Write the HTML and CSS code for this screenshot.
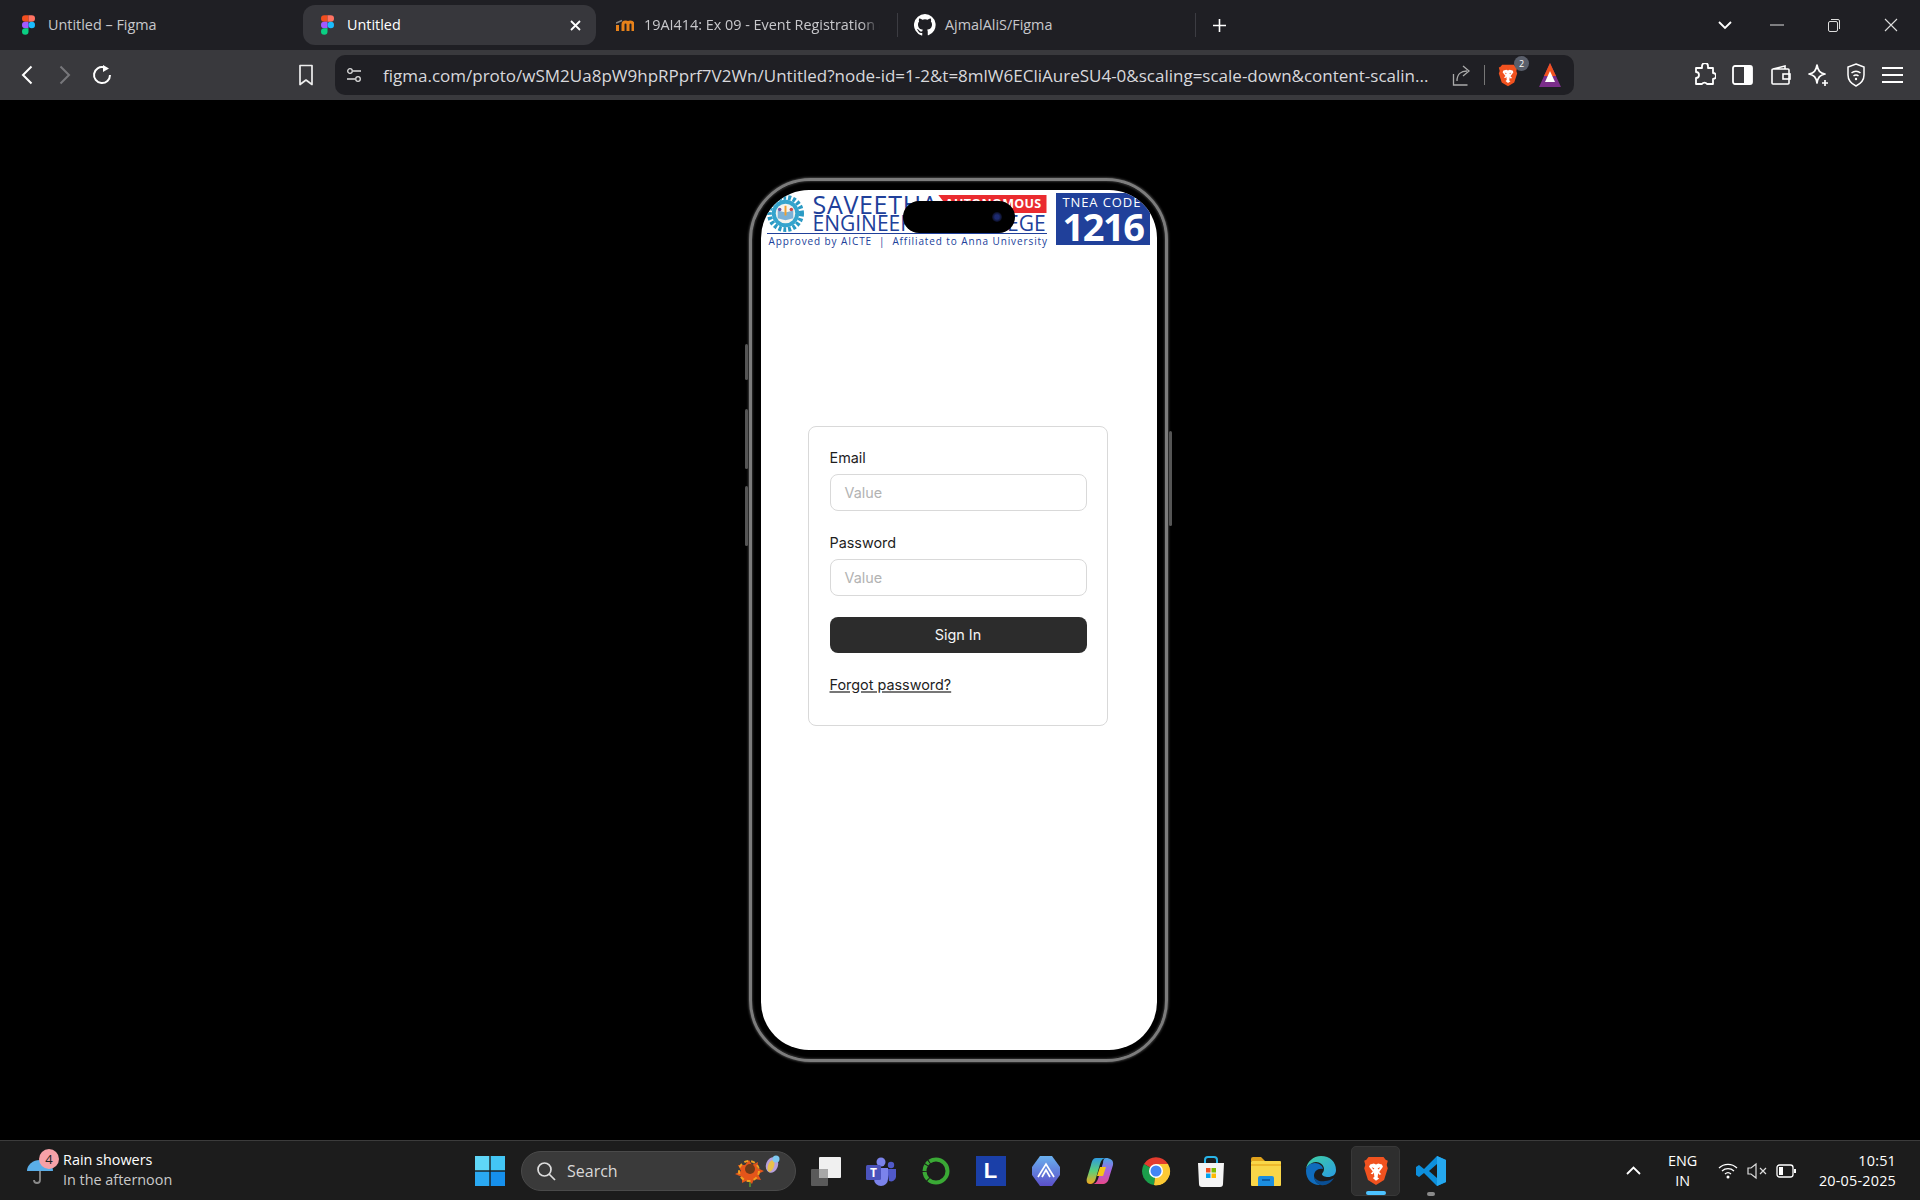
FILE: index.html
```html
<!DOCTYPE html>
<html lang="en">
  <head>
    <meta charset="UTF-8" />
    <title>Untitled</title>
    <link rel="stylesheet" href="styles.css">
  </head>
  <body>
    <svg class="defs" width="0" height="0">
      <symbol id="figma" viewBox="0 0 16 24">
        <path fill="#f24e1e" d="M8 0H4a4 4 0 0 0 0 8h4z"/>
        <path fill="#ff7262" d="M8 0h4a4 4 0 0 1 0 8H8z"/>
        <path fill="#a259ff" d="M8 8H4a4 4 0 0 0 0 8h4z"/>
        <circle fill="#1abcfe" cx="12" cy="12" r="4"/>
        <path fill="#0acf83" d="M4 16h4v4a4 4 0 1 1-4-4z"/>
      </symbol>
      <symbol id="brave" viewBox="0 0 24 28">
        <path fill="#f1521f" d="M5 1h14l2 2.500 2 1-1 4 1 3-3.500 11L12 27l-7.500-4.500L1 11.500l1-3-1-4 2-1z"/>
        <path fill="#fff" d="M6.500 8 10 7l2 1 2-1 3.500 1 1 2-3.500 5 2 2-2 .5-1-1.500-.5 4 1.500 1L12 23l-3-2.500 1.500-1-.5-4-1 1.500-2-.5 2-2L5.500 10z"/>
        <path fill="#f1521f" d="M8 10.500l2.500 1-1 1zM16 10.500l-2.500 1 1 1z"/>
      </symbol>
    </svg>

    <div class="window">
      <div class="tabbar">
        <div class="tab tab-first">
          <svg class="favicon" width="13" height="20"><use href="#figma"/></svg>
          <span>Untitled – Figma</span>
        </div>
        <div class="tab tab-active">
          <svg class="favicon" width="13" height="20"><use href="#figma"/></svg>
          <span>Untitled</span>
          <svg class="tab-close" width="11" height="11" viewBox="0 0 11 11"><path d="M1 1l9 9M10 1l-9 9" stroke="#fff" stroke-width="1.800"/></svg>
        </div>
        <div class="tab tab-moodle">
          <svg class="favicon" width="18" height="14" viewBox="0 0 18 14"><path d="M1.500 13V7M7 13V6.500a2.500 2.500 0 0 1 5 0V13M12 6.500a2.500 2.500 0 0 1 5 0V13" fill="none" stroke="#e8821a" stroke-width="3"/><path d="M0 5l6-2.500" stroke="#8a8a8a" stroke-width="1.500"/></svg>
          <span class="fade">19AI414: Ex 09 - Event Registration (</span>
        </div>
        <div class="tab tab-github">
          <svg class="favicon" width="22" height="22" viewBox="0 0 16 16"><path fill="#fff" d="M8 0a8 8 0 0 0-2.500 15.600c.4.100.5-.2.500-.4v-1.400c-2.200.5-2.700-1-2.700-1-.4-.9-.9-1.200-.9-1.200-.7-.5.100-.5.100-.5.800.1 1.200.8 1.200.8.700 1.200 1.900.9 2.300.7.100-.5.300-.9.500-1.100-1.800-.2-3.600-.9-3.600-4 0-.9.300-1.600.8-2.100-.1-.2-.4-1 .1-2.100 0 0 .7-.2 2.200.8a7.600 7.600 0 0 1 4 0c1.500-1 2.200-.8 2.200-.8.400 1.100.2 1.900.1 2.100.5.600.8 1.300.8 2.100 0 3.100-1.900 3.700-3.600 3.900.3.200.5.700.5 1.500v2.200c0 .2.100.5.500.4A8 8 0 0 0 8 0z"/></svg>
          <span>AjmalAliS/Figma</span>
        </div>
        <svg class="new-tab" width="15" height="15" viewBox="0 0 15 15"><path d="M7.500 1v13M1 7.500h13" stroke="#fff" stroke-width="1.600"/></svg>
        <div class="win-controls">
          <svg class="win-chevron" width="14" height="9" viewBox="0 0 14 9"><path d="M1 1l6 6 6-6" fill="none" stroke="#fff" stroke-width="1.800"/></svg>
          <svg width="14" height="2" viewBox="0 0 14 2"><path d="M0 1h14" stroke="#ddd" stroke-width="1"/></svg>
          <svg width="14" height="14" viewBox="0 0 14 14"><rect x="1.500" y="3.500" width="9" height="10" rx="1.500" fill="none" stroke="#ddd"/><path d="M4 1.500h7a1.500 1.500 0 0 1 1.500 1.500v8" fill="none" stroke="#ddd"/></svg>
          <svg width="14" height="14" viewBox="0 0 14 14"><path d="M1 1l12 12M13 1L1 13" stroke="#ddd" stroke-width="1.100"/></svg>
        </div>
      </div>

      <div class="toolbar">
        <div class="nav-buttons">
          <svg width="12" height="20" viewBox="0 0 12 20"><path d="M10.500 1.500L2 10l8.500 8.500" fill="none" stroke="#fff" stroke-width="2"/></svg>
          <svg width="12" height="20" viewBox="0 0 12 20"><path d="M1.500 1.500L10 10l-8.500 8.500" fill="none" stroke="#77777b" stroke-width="2"/></svg>
          <svg class="reload" width="22" height="22" viewBox="0 0 22 22"><path d="M13 3.300A8 8 0 1 0 19 11" fill="none" stroke="#fff" stroke-width="2"/><path d="M12 1v7l6-3.500z" fill="#fff"/></svg>
        </div>
        <svg class="bookmark" width="16" height="22" viewBox="0 0 16 22"><path d="M2 1.500h12v19l-6-4.500-6 4.500z" fill="none" stroke="#eee" stroke-width="1.700" stroke-linejoin="round"/></svg>
        <div class="addressbar">
          <svg class="site-settings" width="16" height="16" viewBox="0 0 16 16"><g fill="none" stroke="#ddd" stroke-width="1.300"><circle cx="4" cy="4" r="2.300"/><path d="M7 4h8M1 12h8"/><circle cx="12" cy="12" r="2.300"/></g></svg>
          <span class="url">figma.com/proto/wSM2Ua8pW9hpRPprf7V2Wn/Untitled?node-id=1-2&amp;t=8mlW6ECliAureSU4-0&amp;scaling=scale-down&amp;content-scalin...</span>
          <svg class="share" width="20" height="22" viewBox="0 0 20 22"><path d="M1.500 10v11h14" fill="none" stroke="#aaa" stroke-width="1.300"/><path d="M5 17c0-7 4-10 10-10M11 2l6 5-6 5" fill="none" stroke="#aaa" stroke-width="1.300"/></svg>
          <i class="addr-divider"></i>
          <div class="brave-shield">
            <svg width="20" height="25"><use href="#brave"/></svg>
            <b class="shield-badge">2</b>
          </div>
          <svg class="rewards" width="24" height="26" viewBox="0 0 24 26"><path d="M12 1l11 24H1z" fill="#7b2d8b"/><path d="M12 1l6 13H6z" fill="#f1521f"/><path d="M12 9l5 11H7z" fill="#fff"/></svg>
        </div>
        <div class="extensions">
          <svg width="22" height="24" viewBox="0 0 22 24"><path d="M8 3a3 3 0 0 1 6 0v2h5v5a3 3 0 0 1 0 6v5H13a3 3 0 0 0-5 0H2v-6a3 3 0 0 0 0-6V5h6z" fill="none" stroke="#fff" stroke-width="1.800" stroke-linejoin="round"/></svg>
          <svg width="21" height="20" viewBox="0 0 21 20"><rect x="1" y="1" width="19" height="18" rx="2" fill="none" stroke="#fff" stroke-width="1.800"/><rect x="12" y="1" width="8" height="18" fill="#fff"/></svg>
          <svg width="21" height="20" viewBox="0 0 21 20"><path d="M3 4l12-3v3M2 5a1 1 0 0 1 1-1h15a1 1 0 0 1 1 1v13a1 1 0 0 1-1 1H3a1 1 0 0 1-1-1z" fill="none" stroke="#fff" stroke-width="1.600"/><rect x="13" y="9" width="7" height="5" fill="none" stroke="#fff" stroke-width="1.600"/></svg>
          <svg width="22" height="24" viewBox="0 0 22 24"><path d="M10 2c1 6 3 8 8 9-5 1-7 3-8 9-1-6-3-8-8-9 5-1 7-3 8-9z" fill="none" stroke="#fff" stroke-width="1.700" stroke-linejoin="round"/><path d="M18 17v6M15 20h6" stroke="#fff" stroke-width="1.700"/></svg>
          <svg width="20" height="24" viewBox="0 0 20 24"><path d="M10 1l8 3v8c0 6-4 9-8 11-4-2-8-5-8-11V4z" fill="none" stroke="#fff" stroke-width="1.500"/><path d="M5.500 10a6.500 6.500 0 0 1 9 0M7.500 13a3.500 3.500 0 0 1 5 0" fill="none" stroke="#fff" stroke-width="1.400"/><circle cx="10" cy="16" r="1.200" fill="#fff"/></svg>
          <svg width="21" height="18" viewBox="0 0 21 18"><path d="M0 2h21M0 9h21M0 16h21" stroke="#fff" stroke-width="2"/></svg>
        </div>
      </div>

      <main class="stage">
        <div class="phone">
          <i class="side-btn btn-action"></i>
          <i class="side-btn btn-vol-up"></i>
          <i class="side-btn btn-vol-down"></i>
          <i class="side-btn btn-power"></i>
          <div class="screen">
            <header class="college">
              <div class="college-main">
                <div class="college-name">
                  <svg class="seal" width="37" height="37" viewBox="0 0 38 38">
                    <circle cx="19" cy="19" r="16.500" fill="none" stroke="#2a9ac4" stroke-width="5" stroke-dasharray="3 2"/>
                    <circle cx="19" cy="19" r="14" fill="#35a4cd"/>
                    <circle cx="19" cy="19" r="10" fill="#f4f4ee"/>
                    <path d="M11 24l8 2 8-2v-8l-8 2-8-2z" fill="#7bb2d8"/>
                    <path d="M18 11h2v10h-2z" fill="#f0a030"/>
                    <circle cx="13" cy="15" r="1.800" fill="#7050a0"/>
                    <circle cx="25" cy="15" r="1.800" fill="#d04848"/>
                  </svg>
                  <div class="college-words">
                    <div class="line-saveetha">
                      <span>SAVEETHA</span>
                      <span class="autonomous">AUTONOMOUS</span>
                    </div>
                    <div class="line-engineering">ENGINEERING COLLEGE</div>
                  </div>
                </div>
                <div class="approved">Approved by AICTE &nbsp;|&nbsp; Affiliated to Anna University</div>
              </div>
              <div class="tnea">
                <span class="tnea-label">TNEA CODE</span>
                <span class="tnea-code">1216</span>
              </div>
            </header>

            <div class="island"><i class="camera"></i></div>

            <form class="signin">
              <label class="field-label">Email</label>
              <div class="field-input">Value</div>
              <label class="field-label">Password</label>
              <div class="field-input">Value</div>
              <div class="signin-btn">Sign In</div>
              <a class="forgot">Forgot password?</a>
            </form>
          </div>
        </div>
      </main>

      <footer class="taskbar">
        <div class="weather">
          <div class="weather-icon">
            <svg width="30" height="30" viewBox="0 0 30 30"><path d="M2 15a13 11 0 0 1 26 0z" fill="#5aaee8"/><path d="M15 15v9a3 3 0 0 1-6 0" fill="none" stroke="#8a8a8a" stroke-width="1.800"/></svg>
            <b class="weather-badge">4</b>
          </div>
          <div class="weather-text">
            <span class="weather-title">Rain showers</span>
            <span class="weather-sub">In the afternoon</span>
          </div>
        </div>

        <svg class="start" width="30" height="30" viewBox="0 0 30 30">
          <rect width="14.300" height="14.300" fill="#5fd6f7"/><rect x="15.700" width="14.300" height="14.300" fill="#43c6f5"/>
          <rect y="15.700" width="14.300" height="14.300" fill="#2aa9f2"/><rect x="15.700" y="15.700" width="14.300" height="14.300" fill="#1690ec"/>
        </svg>

        <div class="search">
          <svg width="20" height="20" viewBox="0 0 20 20"><circle cx="8.500" cy="8.500" r="6.500" fill="none" stroke="#ddd" stroke-width="1.700"/><path d="M13 13l6 6" stroke="#ddd" stroke-width="1.700"/></svg>
          <span>Search</span>
          <svg class="search-flower" width="50" height="34" viewBox="0 0 50 34">
            <path d="M17 33V22" stroke="#5a9a30" stroke-width="1.500"/>
            <path d="M16 6l3 5 6-3-1 6 7 3-6 3 3 6-7-1-2 5-4-4-6 3 0-6-7-3 6-3-3-6 7 0z" fill="#e4551a"/>
            <circle cx="16" cy="17" r="10" fill="none" stroke="#f2a020" stroke-width="2" stroke-dasharray="4 3"/>
            <circle cx="17" cy="15" r="5" fill="#6f3a18"/>
            <ellipse cx="39" cy="11" rx="6" ry="8" fill="#b6a0dc" transform="rotate(20 39 11)"/>
            <ellipse cx="38" cy="12" rx="3" ry="6" fill="#e8c04c" transform="rotate(20 38 12)"/>
            <circle cx="43" cy="5" r="3.500" fill="#7ec8f0"/>
          </svg>
        </div>

        <div class="task-icons">
          <span class="task-icon"><svg width="30" height="30" viewBox="0 0 30 30"><rect y="13" width="17" height="17" rx="1" fill="#5a5a5a"/><rect x="8" y="1" width="22" height="21" rx="1" fill="#f0f0f0"/><rect x="8" y="13" width="9" height="9" fill="#a8a8a8"/></svg></span>
          <span class="task-icon"><svg width="30" height="30" viewBox="0 0 30 30"><circle cx="15" cy="6" r="4.500" fill="#7b83eb"/><circle cx="25" cy="9" r="3.200" fill="#5059c9"/><path d="M21 13h9v8a5 5 0 0 1-7 4z" fill="#5059c9"/><path d="M8 12h14v11a7 7 0 0 1-14 0z" fill="#7b83eb"/><rect y="9" width="15" height="15" rx="1.500" fill="#4b53bc"/><text class="teams-t" x="7.500" y="21">T</text></svg></span>
          <span class="task-icon"><svg width="30" height="30" viewBox="0 0 30 30"><circle cx="15" cy="15" r="11.500" fill="none" stroke="#3aa935" stroke-width="4" stroke-dasharray="26 1 8 1 6 1 3 1"/></svg></span>
          <span class="task-icon"><span class="lapp">L</span></span>
          <span class="task-icon"><svg width="28" height="30" viewBox="0 0 28 30"><defs><linearGradient id="arc" x1="0" y1="0" x2="0" y2="1"><stop offset="0" stop-color="#6ab0ee"/><stop offset="1" stop-color="#5b4fc9"/></linearGradient></defs><path d="M8 0h12l8 11v8l-8 11H8L0 19v-8z" fill="url(#arc)"/><path d="M6 21L14 8l8 13M10 21l4-7 4 7" fill="none" stroke="#fff" stroke-width="1.700"/></svg></span>
          <span class="task-icon"><svg width="30" height="30" viewBox="0 0 30 30"><defs><linearGradient id="copa" x1="0" y1="0" x2="0" y2="1"><stop offset="0" stop-color="#2f9be0"/><stop offset=".5" stop-color="#5ad07a"/><stop offset="1" stop-color="#f5a81c"/></linearGradient><linearGradient id="copb" x1="0" y1="0" x2="0" y2="1"><stop offset="0" stop-color="#4aa8e8"/><stop offset=".5" stop-color="#a860e0"/><stop offset="1" stop-color="#e8488a"/></linearGradient></defs><path d="M10 2h10c-3 0-5 2-6 6l-4 14c-1 4-3 6-6 6-3 0-4-3-3-6l4-13c1-4 2-7 5-7z" fill="url(#copa)"/><path d="M20 2c4 0 8 2 7 7l-4 13c-1 4-3 6-7 6H6c3 0 5-2 6-5l5-16c0-3 1-5 3-5z" fill="url(#copb)"/><path d="M14 11h6l-3 9h-6z" fill="#f5c518"/></svg></span>
          <span class="task-icon"><svg width="30" height="30" viewBox="0 0 30 30"><path d="M15 15L3 8a14 14 0 0 1 24 0z" fill="#e33b2e"/><path d="M15 15l-12-7a14 14 0 0 0 10 21z" fill="#1b9e4b"/><path d="M15 15h14a14 14 0 0 1-16 14z" fill="#fcc934"/><path d="M15 8h12a14 14 0 0 1-14 21l7-12z" fill="#fcc934"/><circle cx="15" cy="15" r="7" fill="#fff"/><circle cx="15" cy="15" r="5.500" fill="#4285f4"/></svg></span>
          <span class="task-icon"><svg width="30" height="32" viewBox="0 0 30 32"><path d="M9 8V5a3 3 0 0 1 3-3h6a3 3 0 0 1 3 3v3" fill="none" stroke="#28b4e8" stroke-width="2"/><path d="M2 8h26l-1 21a3 3 0 0 1-3 3H6a3 3 0 0 1-3-3z" fill="#f4f4f4"/><rect x="10" y="13" width="4.500" height="4.500" fill="#f25022"/><rect x="15.500" y="13" width="4.500" height="4.500" fill="#7fba00"/><rect x="10" y="18.500" width="4.500" height="4.500" fill="#00a4ef"/><rect x="15.500" y="18.500" width="4.500" height="4.500" fill="#ffb900"/></svg></span>
          <span class="task-icon"><svg width="30" height="30" viewBox="0 0 30 30"><path d="M0 3a2 2 0 0 1 2-2h8l4 4h-14z" fill="#e0a21c"/><rect y="5" width="30" height="25" rx="1" fill="#f9d648"/><path d="M0 9h30" stroke="#eeb92c" stroke-width="2"/><path d="M9 20h12a2 2 0 0 1 2 2v8H7v-8a2 2 0 0 1 2-2z" fill="#1c8ee0"/><path d="M11 24h8" stroke="#0d5fa8" stroke-width="2"/></svg></span>
          <span class="task-icon"><svg width="30" height="30" viewBox="0 0 30 30"><defs><linearGradient id="edg" x1="0" y1="0" x2="1" y2="1"><stop offset="0" stop-color="#3fd0a0"/><stop offset="1" stop-color="#2a9de4"/></linearGradient></defs><path d="M15 0c9 0 15 6 15 14 0 5-4 7-8 7-3 0-6-1-6-3 0-1 2-2 2-5 0-4-4-7-8-7S2 9 0 13C1 6 7 0 15 0z" fill="url(#edg)"/><path d="M0 15c0-5 4-8 9-8 4 0 8 3 8 6-5-1-9 2-9 7 0 4 3 8 7 9C7 30 0 24 0 15z" fill="#0f6cbd"/><path d="M28 22c-3 5-8 8-13 7-4-1-7-5-7-9 1 4 6 6 11 5 3 0 6-1 9-3z" fill="#0a4f94"/></svg></span>
          <span class="task-icon task-icon-active"><svg width="26" height="30"><use href="#brave"/></svg><i class="running running-active"></i></span>
          <span class="task-icon"><svg width="30" height="30" viewBox="0 0 30 30"><path d="M21 0l9 4v22l-9 4L8 17l-5 4-3-2v-8l3-2 5 4zM21 8l-8 7 8 7z" fill="#0d8fdc"/><path d="M21 0l9 4v22l-9 4z" fill="#25a8ef"/></svg><i class="running"></i></span>
        </div>

        <div class="tray">
          <svg class="tray-chevron" width="15" height="9" viewBox="0 0 15 9"><path d="M1 8l6.500-6.500L14 8" fill="none" stroke="#fff" stroke-width="1.800"/></svg>
          <div class="lang">ENG<br>IN</div>
          <div class="tray-icons">
            <svg width="20" height="18" viewBox="0 0 20 18"><g fill="none" stroke="#fff" stroke-width="1.300"><path d="M1 6a13 13 0 0 1 18 0M4 9a9 9 0 0 1 12 0M7 12a4.500 4.500 0 0 1 6 0"/></g><circle cx="10" cy="15" r="1.500" fill="#fff"/></svg>
            <svg width="20" height="18" viewBox="0 0 20 18"><path d="M1 6h3l5-4v14l-5-4H1z" fill="none" stroke="#ddd" stroke-width="1.200"/><path d="M13 6l6 6M19 6l-6 6" stroke="#ddd" stroke-width="1.200"/></svg>
            <svg width="20" height="14" viewBox="0 0 20 14"><rect x="1" y="1" width="16" height="12" rx="2.500" fill="none" stroke="#fff" stroke-width="1.300"/><rect x="3" y="3" width="4" height="8" fill="#fff"/><rect x="18" y="5" width="2" height="4" fill="#fff"/></svg>
          </div>
          <div class="clock">10:51<br>20-05-2025</div>
        </div>
      </footer>
    </div>
  </body>
</html>
```

FILE: styles.css
```css
* {
  box-sizing: border-box;
}
html,
body {
  margin: 0;
  height: 100%;
  background: #000;
}
.defs {
  position: absolute;
}
.window {
  width: 1920px;
  height: 1200px;
  display: flex;
  flex-direction: column;
  overflow: hidden;
  font-family: "Open Sans", sans-serif;
  color: #fff;
}

/* tab strip */
.tabbar {
  height: 50px;
  display: flex;
  align-items: center;
  background: #1f1f24;
  font-size: 14.400px;
}
.tab {
  height: 40px;
  display: flex;
  align-items: center;
  color: #c8c8cc;
  white-space: nowrap;
}
.tab span {
  margin-top: -2px;
}
.tab-first {
  width: 303px;
  padding-left: 22px;
  gap: 13px;
}
.tab-active {
  width: 293px;
  padding-left: 18px;
  gap: 13px;
  background: #37373c;
  border-radius: 12px;
  color: #fff;
}
.tab-close {
  margin-left: auto;
  margin-right: 15px;
}
.tab-moodle {
  width: 302px;
  padding-left: 20px;
  gap: 10px;
  border-right: 1px solid #3c3c42;
  height: 24px;
}
.fade {
  width: 236px;
  overflow: hidden;
  -webkit-mask-image: linear-gradient(to right, #000 92%, transparent);
  mask-image: linear-gradient(to right, #000 92%, transparent);
}
.tab-github {
  width: 298px;
  padding-left: 16px;
  gap: 9px;
  border-right: 1px solid #3c3c42;
  height: 24px;
}
.new-tab {
  margin-left: 16px;
}
.win-controls {
  margin-left: auto;
  padding-right: 22px;
  display: flex;
  align-items: center;
  gap: 43px;
}
.win-chevron {
  margin-right: -5px;
}

/* address row */
.toolbar {
  height: 50px;
  display: flex;
  align-items: center;
  background: #39393d;
}
.nav-buttons {
  width: 298px;
  padding-left: 21px;
  display: flex;
  align-items: center;
  gap: 26px;
}
.reload {
  margin-left: -6px;
}
.bookmark {
  margin-right: 21px;
}
.addressbar {
  width: 1239px;
  height: 40px;
  display: flex;
  align-items: center;
  padding-left: 11px;
  background: #1f1f24;
  border-radius: 10px;
}
.site-settings {
  margin-right: 21px;
}
.url {
  width: 1052px;
  font-size: 17px;
  white-space: nowrap;
  color: #d8d8dc;
}
.share {
  margin-left: 17px;
}
.addr-divider {
  width: 1px;
  height: 20px;
  margin-left: 12px;
  background: #777;
}
.brave-shield {
  position: relative;
  margin-left: 13px;
  display: flex;
}
.shield-badge {
  position: absolute;
  top: -7px;
  right: -11px;
  width: 15px;
  height: 15px;
  border-radius: 50%;
  background: #5a5f6b;
  font-size: 9px;
  font-weight: 400;
  line-height: 15px;
  text-align: center;
}
.rewards {
  margin-left: 20px;
}
.extensions {
  flex: 1;
  padding: 0 17px 0 120px;
  display: flex;
  align-items: center;
  justify-content: space-between;
}

/* black area with the device */
.stage {
  height: 1040px;
  background: #000;
  display: flex;
  align-items: center;
  justify-content: center;
  padding-right: 4px;
}
.phone {
  position: relative;
  width: 419px;
  height: 884px;
  padding: 9px 8px 9px 9px;
  border: 3px solid #7c7c7c;
  border-radius: 62px;
  background: #000;
  box-shadow: 0 0 2px 1px #3a3a3a, inset 0 0 2px 1px #2c2c2c;
}
.side-btn {
  position: absolute;
  width: 3px;
  background: #555;
  border-radius: 2px;
}
.btn-action {
  left: -7px;
  top: 163px;
  height: 36px;
}
.btn-vol-up {
  left: -7px;
  top: 228px;
  height: 60px;
}
.btn-vol-down {
  left: -7px;
  top: 305px;
  height: 60px;
}
.btn-power {
  right: -7px;
  top: 250px;
  height: 95px;
}
.screen {
  position: relative;
  height: 100%;
  background: #fff;
  border-radius: 48px;
  overflow: hidden;
  display: flex;
  flex-direction: column;
}

/* college banner */
.college {
  height: 57px;
  flex-shrink: 0;
  padding: 3px 0 0 6px;
  display: flex;
  align-items: flex-start;
  gap: 9px;
  color: #20409a;
  font-family: "Open Sans", sans-serif;
}
.college-main {
  width: 280px;
}
.college-name {
  display: flex;
  align-items: center;
  gap: 9px;
  height: 41px;
  border-bottom: 1.500px solid #20409a;
}
.seal {
  flex-shrink: 0;
}
.college-words {
  flex: 1;
  min-width: 0;
}
.line-saveetha {
  display: flex;
  align-items: center;
  justify-content: space-between;
  font-size: 25px;
  line-height: 20px;
  letter-spacing: .7px;
  white-space: nowrap;
}
.autonomous {
  width: 117px;
  height: 18px;
  padding-right: 5px;
  clip-path: polygon(0 0, 100% 0, 100% 100%, 14px 100%);
  background: #ea2b2f;
  color: #fff;
  font-size: 12.500px;
  font-weight: 700;
  line-height: 18px;
  text-align: right;
  letter-spacing: .3px;
}
.line-engineering {
  font-size: 21px;
  line-height: 18px;
  white-space: nowrap;
}
.approved {
  padding: 1px 0 0 2px;
  font-size: 10px;
  line-height: 13px;
  letter-spacing: .9px;
  white-space: nowrap;
}
.tnea {
  width: 94px;
  height: 52px;
  flex-shrink: 0;
  background: #20409a;
  color: #fff;
  overflow: hidden;
  white-space: nowrap;
  display: flex;
  flex-direction: column;
  padding-left: 7px;
}
.tnea-label {
  font-size: 13px;
  line-height: 18px;
  font-weight: 500;
  letter-spacing: .9px;
}
.tnea-code {
  font-size: 38px;
  line-height: 31px;
  font-weight: 700;
  letter-spacing: -1.500px;
}
.island {
  position: absolute;
  left: 142px;
  top: 11px;
  width: 112px;
  height: 32px;
  border-radius: 16px;
  background: #000;
}
.camera {
  position: absolute;
  right: 13px;
  top: 11px;
  width: 10px;
  height: 10px;
  border-radius: 50%;
  background: radial-gradient(#1d2a70 30%, #0a0d20 70%);
}

/* sign in card */
.signin {
  width: 300px;
  height: 300px;
  margin: 179px 0 0 47px;
  padding: 21px 20px 21px 21px;
  border: 1px solid #d9d9d9;
  border-radius: 8px;
  display: flex;
  flex-direction: column;
  font-family: Inter, sans-serif;
  font-size: 14.400px;
  color: #1e1e1e;
}
.field-label {
  line-height: 20px;
}
.field-input {
  height: 37px;
  margin: 6px 0 21px;
  padding-left: 14px;
  border: 1px solid #d9d9d9;
  border-radius: 8px;
  color: #b3b3b3;
  line-height: 35px;
}
.field-input + .field-label {
  margin-top: 1px;
}
.signin-btn {
  height: 36px;
  background: #2c2c2c;
  border-radius: 8px;
  color: #f5f5f5;
  line-height: 36px;
  text-align: center;
}
.forgot {
  margin-top: 22px;
  line-height: 20px;
  align-self: flex-start;
  text-decoration: underline;
  text-decoration-color: #777;
  text-decoration-thickness: 2px;
}

/* windows taskbar */
.taskbar {
  height: 60px;
  display: flex;
  align-items: center;
  background: #1c1c1c;
  border-top: 1px solid #3b3b3b;
  font-family: "Open Sans", sans-serif;
  font-size: 14.400px;
}
.weather {
  width: 475px;
  padding-left: 25px;
  display: flex;
  align-items: center;
  gap: 8px;
}
.weather-icon {
  position: relative;
  display: flex;
}
.weather-badge {
  position: absolute;
  top: -7px;
  left: 14px;
  width: 20px;
  height: 20px;
  border-radius: 50%;
  background: #f7a1a8;
  color: #222;
  font-size: 13px;
  font-weight: 400;
  line-height: 20px;
  text-align: center;
}
.weather-text {
  display: flex;
  flex-direction: column;
  margin-top: -2px;
  line-height: 20px;
}
.weather-sub {
  color: #c9c9c9;
}
.start {
  margin-right: 16px;
}
.search {
  width: 275px;
  height: 40px;
  display: flex;
  align-items: center;
  gap: 11px;
  padding-left: 14px;
  background: #3a3a3a;
  border-radius: 20px;
  border: 1px solid #4a4a4a;
  font-size: 16px;
  color: #d8d8d8;
}
.search-flower {
  margin-left: auto;
  margin-right: 12px;
}
.task-icons {
  margin-left: 2px;
  display: flex;
}
.task-icon {
  position: relative;
  width: 55px;
  height: 50px;
  display: flex;
  align-items: center;
  justify-content: center;
  border-radius: 5px;
}
.task-icon-active {
  width: 49px;
  margin: 0 3px;
  background: #2e2e2e;
  border: 1px solid #383838;
}
.running {
  position: absolute;
  bottom: 0;
  left: 50%;
  width: 8px;
  height: 4px;
  margin-left: -4px;
  border-radius: 2px;
  background: #8a8a8a;
}
.running-active {
  width: 20px;
  margin-left: -10px;
  background: #4cc2ff;
}
.teams-t {
  fill: #fff;
  font-size: 12px;
  font-weight: 700;
  text-anchor: middle;
  font-family: "Open Sans", sans-serif;
}
.lapp {
  width: 30px;
  height: 30px;
  background: #1a3fa8;
  color: #fff;
  font-family: "Liberation Sans", sans-serif;
  font-size: 22px;
  font-weight: 700;
  line-height: 30px;
  text-align: center;
}
.tray {
  flex: 1;
  display: flex;
  align-items: center;
  padding: 0 24px 0 168px;
  line-height: 20px;
}
.lang {
  margin-left: 27px;
  text-align: center;
}
.tray-icons {
  margin-left: 21px;
  display: flex;
  align-items: center;
  gap: 9px;
}
.clock {
  margin-left: auto;
  text-align: right;
  letter-spacing: .2px;
}
```
